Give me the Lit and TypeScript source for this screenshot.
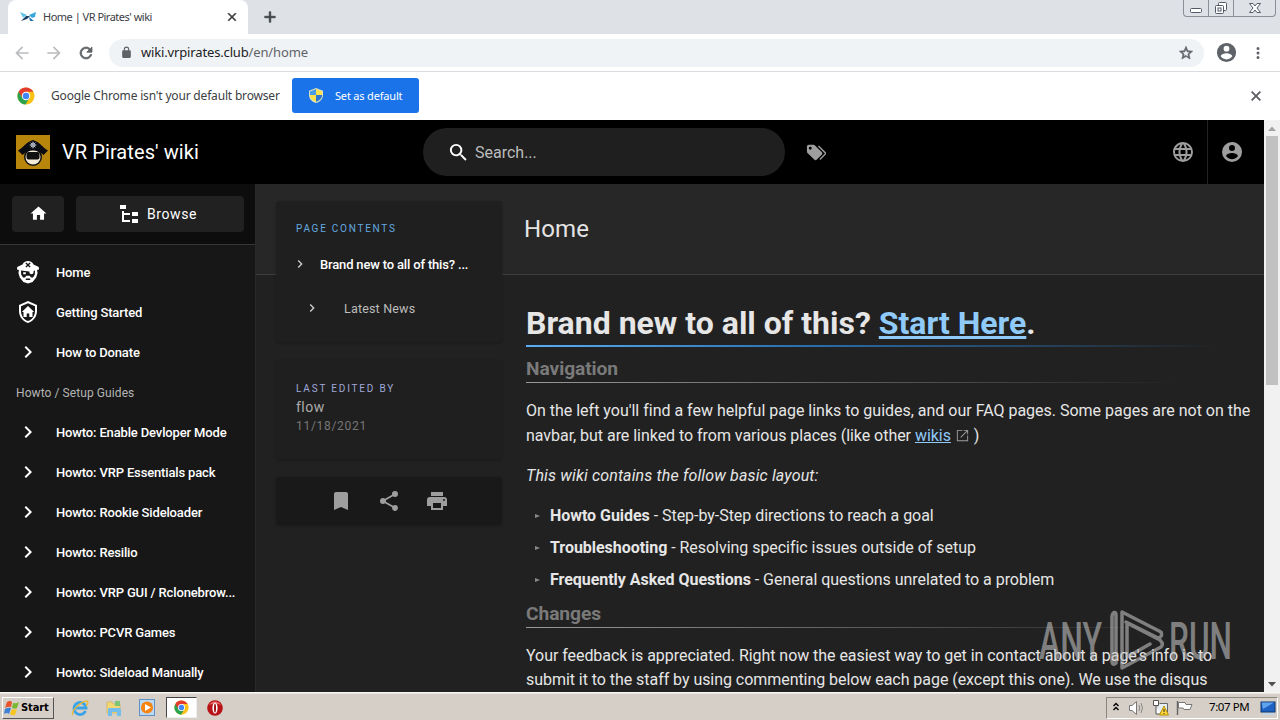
import { LitElement, html, css, svg } from 'lit';
import { customElement, property } from 'lit/decorators.js';

const icons: Record<string, string> = {
  home: 'M10,20V14H14V20H19V12H22L12,3L2,12H5V20H10Z',
  chevron: 'M8.59,16.58L13.17,12L8.59,7.41L10,6L16,12L10,18L8.59,16.58Z',
  magnify: 'M9.5,3A6.5,6.5 0 0,1 16,9.5C16,11.11 15.41,12.59 14.44,13.73L14.71,14H15.5L20.5,19L19,20.5L14,15.5V14.71L13.73,14.44C12.59,15.41 11.11,16 9.5,16A6.5,6.5 0 0,1 3,9.5A6.5,6.5 0 0,1 9.5,3M9.5,5C7,5 5,7 5,9.5C5,12 7,14 9.5,14C12,14 14,12 14,9.5C14,7 12,5 9.5,5Z',
  tags: 'M5.5,9A1.5,1.5 0 0,0 7,7.5A1.5,1.5 0 0,0 5.5,6A1.5,1.5 0 0,0 4,7.5A1.5,1.5 0 0,0 5.5,9M17.41,11.58C17.77,11.94 18,12.44 18,13C18,13.55 17.78,14.05 17.41,14.41L12.41,19.41C12.05,19.77 11.55,20 11,20C10.45,20 9.95,19.78 9.58,19.41L2.59,12.42C2.22,12.05 2,11.55 2,11V6C2,4.89 2.89,4 4,4H9C9.55,4 10.05,4.22 10.41,4.58L17.41,11.58M13.54,5.71L14.54,4.71L21.41,11.58C21.78,11.94 22,12.45 22,13C22,13.55 21.78,14.05 21.42,14.41L16.04,19.79L15.04,18.79L20.75,13L13.54,5.71Z',
  web: 'M16.36,14C16.44,13.34 16.5,12.68 16.5,12C16.5,11.32 16.44,10.66 16.36,10H19.74C19.9,10.64 20,11.31 20,12C20,12.69 19.9,13.36 19.74,14M14.59,19.56C15.19,18.45 15.65,17.25 15.97,16H18.92C17.96,17.65 16.43,18.93 14.59,19.56M14.34,14H9.66C9.56,13.34 9.5,12.68 9.5,12C9.5,11.32 9.56,10.65 9.66,10H14.34C14.43,10.65 14.5,11.32 14.5,12C14.5,12.68 14.43,13.34 14.34,14M12,19.96C11.17,18.76 10.5,17.43 10.09,16H13.91C13.5,17.43 12.83,18.76 12,19.96M8,8H5.08C6.03,6.34 7.57,5.06 9.4,4.44C8.8,5.55 8.35,6.75 8,8M5.08,16H8C8.35,17.25 8.8,18.45 9.4,19.56C7.57,18.93 6.03,17.65 5.08,16M4.26,14C4.1,13.36 4,12.69 4,12C4,11.31 4.1,10.64 4.26,10H7.64C7.56,10.66 7.5,11.32 7.5,12C7.5,12.68 7.56,13.34 7.64,14M12,4.03C12.83,5.23 13.5,6.57 13.91,8H10.09C10.5,6.57 11.17,5.23 12,4.03M18.92,8H15.97C15.65,6.75 15.19,5.55 14.59,4.44C16.43,5.07 17.96,6.34 18.92,8M12,2C6.47,2 2,6.5 2,12A10,10 0 0,0 12,22A10,10 0 0,0 22,12A10,10 0 0,0 12,2Z',
  account: 'M12,19.2C9.5,19.2 7.29,17.92 6,16C6.03,14 10,12.9 12,12.9C14,12.9 17.97,14 18,16C16.71,17.92 14.5,19.2 12,19.2M12,5A3,3 0 0,1 15,8A3,3 0 0,1 12,11A3,3 0 0,1 9,8A3,3 0 0,1 12,5M12,2A10,10 0 0,0 2,12A10,10 0 0,0 12,22A10,10 0 0,0 22,12C22,6.47 17.5,2 12,2Z',
  bookmark: 'M17,3H7A2,2 0 0,0 5,5V21L12,18L19,21V5C19,3.89 18.1,3 17,3Z',
  share: 'M18,16.08C17.24,16.08 16.56,16.38 16.04,16.85L8.91,12.7C8.96,12.47 9,12.24 9,12C9,11.76 8.96,11.53 8.91,11.3L15.96,7.19C16.5,7.69 17.21,8 18,8A3,3 0 0,0 21,5A3,3 0 0,0 18,2A3,3 0 0,0 15,5C15,5.24 15.04,5.47 15.09,5.7L8.04,9.81C7.5,9.31 6.79,9 6,9A3,3 0 0,0 3,12A3,3 0 0,0 6,15C6.79,15 7.5,14.69 8.04,14.19L15.16,18.34C15.11,18.55 15.08,18.77 15.08,19C15.08,20.61 16.39,21.91 18,21.91C19.61,21.91 20.92,20.61 20.92,19A2.92,2.92 0 0,0 18,16.08Z',
  printer: 'M18,3H6V7H18M19,12A1,1 0 0,1 18,11A1,1 0 0,1 19,10A1,1 0 0,1 20,11A1,1 0 0,1 19,12M16,19H8V14H16M19,8H5A3,3 0 0,0 2,11V17H6V21H18V17H22V11A3,3 0 0,0 19,8Z',
  tree: 'M3,3H9V7H3V3M15,10H21V14H15V10M15,17H21V21H15V17M13,13H7V18H13V20H5V9H7V11H13V13Z',
  shield: 'M21,11C21,16.55 17.16,21.74 12,23C6.84,21.74 3,16.55 3,11V5L12,1L21,5V11M12,21C15.75,20 19,15.54 19,11.22V6.3L12,3.18L5,6.3V11.22C5,15.54 8.25,20 12,21M12,6L5.8,12H7.5V17H10.7V13.4H13.3V17H16.5V12H18.2L12,6Z',
  pirate: 'M12,1C14.5,1 16.6,2.4 17.5,4.6L22.8,7L23,9.5L21,10L21.6,13L20.2,17.4L16.6,22L12,23.4L7.4,22L3.8,17.4L2.4,13L3,10L1,9.5L1.2,7L6.5,4.6C7.4,2.4 9.5,1 12,1M9.4,3.4L11.1,5L9.4,6.6L10.3,7.4L12,5.9L13.7,7.4L14.6,6.6L12.9,5L14.6,3.4L13.7,2.6L12,4.1L10.3,2.6L9.4,3.4M5,10.6L5.2,14.6L7,17.4L9,17.4L10.2,15.8H13.8L15,17.4L17,17.4L18.8,14.6L19,10.6L17.6,10.9C17.8,13 16.8,14.2 15.6,14.2C14,14.2 13.2,13 13.4,11.4L5,10.6M7.2,12.2H9.8V14.2H7.2V12.2M9.8,18.4V20H14.2V18.4H9.8Z',
  back: 'M20,11V13H7.8L13.4,18.6L12,20L4,12L12,4L13.4,5.4L7.8,11H20Z',
  forward: 'M4,11V13H16.2L10.6,18.6L12,20L20,12L12,4L10.6,5.4L16.2,11H4Z',
  reload: 'M17.65,6.35C16.2,4.9 14.21,4 12,4A8,8 0 0,0 4,12A8,8 0 0,0 12,20C15.73,20 18.84,17.45 19.73,14H17.65C16.83,16.33 14.61,18 12,18A6,6 0 0,1 6,12A6,6 0 0,1 12,6C13.66,6 15.14,6.69 16.22,7.78L13,11H20V4L17.65,6.35Z',
  lock: 'M18,8H17V6A5,5 0 0,0 7,6V8H6A2,2 0 0,0 4,10V20A2,2 0 0,0 6,22H18A2,2 0 0,0 20,20V10A2,2 0 0,0 18,8M9,6A3,3 0 0,1 15,6V8H9V6Z',
  star: 'M12,15.39L8.24,17.66L9.23,13.38L5.91,10.5L10.29,10.13L12,6.09L13.71,10.13L18.09,10.5L14.77,13.38L15.76,17.66M22,9.24L14.81,8.63L12,2L9.19,8.63L2,9.24L7.45,13.97L5.82,21L12,17.27L18.18,21L16.54,13.97L22,9.24Z',
  close: 'M19,6.41L17.59,5L12,10.59L6.41,5L5,6.41L10.59,12L5,17.59L6.41,19L12,13.41L17.59,19L19,17.59L13.41,12L19,6.41Z',
  plus: 'M19,13H13V19H11V13H5V11H11V5H13V11H19V13Z',
  dots: 'M12,16A2,2 0 1,1 12,20A2,2 0 0,1 12,16M12,10A2,2 0 1,1 12,14A2,2 0 0,1 12,10M12,4A2,2 0 1,1 12,8A2,2 0 0,1 12,4Z',
  external: 'M14,3V4.5H18.5L8.6,14.4L9.7,15.5L19.5,5.6V10H21V3M19.5,19.5H4.5V4.5H12V3H3V21H21V12H19.5V19.5Z',
};

@customElement('wiki-icon')
export class WikiIcon extends LitElement {

  @property()
  name = '';

  @property({ type: Number })
  size = 24;

  static styles = css`
    :host {
      display: block;
      flex: none;
    }

    svg {
      display: block;
      fill: currentColor;
    }

    .bold {
      stroke: currentColor;
      stroke-width: 1px;
    }
  `;

  render() {
    const bold = ['close', 'plus', 'reload', 'star'].includes(this.name);

    return html`<svg class=${bold ? 'bold' : ''} width=${this.size} height=${this.size} viewBox="0 0 24 24"><path d=${icons[this.name]} fill-rule="evenodd"></path></svg>`;
  }
}

const chromeLogo = (size: number) => html`
  <svg width=${size} height=${size} viewBox="0 0 20 20">
    <circle cx="10" cy="10" r="9.5" fill="#fbc116"></circle>
    <path d="M10 10 1.8 5.2A9.5 9.5 0 0 0 9.4 19.5L14 12Z" fill="#2ba24c"></path>
    <path d="M10 10 5.8 12 1.8 5.2A9.5 9.5 0 0 1 18.2 5.4H10Z" fill="#e33b2e"></path>
    <circle cx="10" cy="10" r="4.7" fill="#fff"></circle>
    <circle cx="10" cy="10" r="3.6" fill="#4285f4"></circle>
  </svg>
`;

const quadrants = svg`
  <path d="M0 3 7 0V7H0Z" fill="#4a9be8"></path>
  <path d="M7 0 14 3V7H7Z" fill="#ffe14d"></path>
  <path d="M0 7H7V15C3 13 0 11 0 7Z" fill="#ffe14d"></path>
  <path d="M7 7H14C14 11 11 13 7 15Z" fill="#2f74d0"></path>
`;

@customElement('app-root')
export class AppRoot extends LitElement {

  links = [
    { icon: 'pirate', label: 'Home' },
    { icon: 'shield', label: 'Getting Started' },
    { icon: 'chevron', label: 'How to Donate' },
    { label: 'Howto / Setup Guides' },
    { icon: 'chevron', label: 'Howto: Enable Devloper Mode' },
    { icon: 'chevron', label: 'Howto: VRP Essentials pack' },
    { icon: 'chevron', label: 'Howto: Rookie Sideloader' },
    { icon: 'chevron', label: 'Howto: Resilio' },
    { icon: 'chevron', label: 'Howto: VRP GUI / Rclonebrow...' },
    { icon: 'chevron', label: 'Howto: PCVR Games' },
    { icon: 'chevron', label: 'Howto: Sideload Manually' },
  ];

  static styles = css`
    :host {
      display: flex;
      flex-direction: column;
      position: relative;
      width: 1280px;
      height: 720px;
      overflow: hidden;
      font-family: Roboto, sans-serif;
      color: #fff;
      --ui: "Noto Sans", "Open Sans", sans-serif;
    }

    * {
      box-sizing: border-box;
    }

    svg {
      display: block;
      flex: none;
    }

    .tabs {
      display: flex;
      flex: none;
      height: 34px;
      padding-left: 8px;
      background: #dee1e6;
      color: #3c4043;
      font: 11px var(--ui);
    }

    .tab {
      display: flex;
      align-items: center;
      width: 240px;
      padding: 0 9px 0 12px;
      background: #fff;
      border-radius: 8px 8px 0 0;
    }

    .tab span {
      flex: 1;
      margin-left: 7px;
      padding-bottom: 1px;
      letter-spacing: -0.5px;
    }

    .tabs > wiki-icon {
      margin: 8px 0 0 13px;
    }

    .window {
      display: flex;
      width: 93px;
      height: 17px;
      margin: 0 4px 0 auto;
      border: 1px solid #8b8f98;
      border-top: 0;
      border-radius: 0 0 4px 4px;
    }

    .window div {
      display: flex;
      justify-content: center;
      width: 25px;
      border-right: 1px solid #8b8f98;
    }

    .window div:last-child {
      flex: 1;
      border: 0;
    }

    .toolbar {
      display: flex;
      flex: none;
      align-items: center;
      height: 38px;
      padding: 0 10px 0 12px;
      background: #fff;
      border-bottom: 1px solid #d9dbde;
      color: #5f6368;
    }

    .toolbar > wiki-icon {
      margin: 0 14px 0 1px;
    }

    .toolbar > .off {
      margin: 0 12px 0 0;
      color: #babcbe;
    }

    .toolbar > .dots {
      margin: 0 3px 0 11px;
    }

    .toolbar > .me {
      margin: 0;
    }

    .url {
      display: flex;
      flex: 1;
      align-items: center;
      height: 28px;
      margin-right: 11px;
      padding: 0 10px 0 11px;
      border-radius: 14px;
      background: #f0f3f6;
      font: 13px var(--ui);
      letter-spacing: -0.15px;
    }

    .url span {
      flex: 1;
      margin-left: 8px;
      padding-bottom: 1px;
    }

    .url b {
      font-weight: 400;
      color: #202124;
    }

    .infobar {
      display: flex;
      flex: none;
      align-items: center;
      height: 48px;
      padding: 0 16px 0 17px;
      background: #fff;
      color: #3c4043;
      font: 12px var(--ui);
    }

    .infobar > span {
      width: 241px;
      padding: 0 0 1px 16px;
      letter-spacing: -0.18px;
      white-space: nowrap;
    }

    .infobar wiki-icon {
      margin-left: auto;
      color: #5f6368;
    }

    .default {
      display: flex;
      align-items: center;
      width: 127px;
      height: 35px;
      margin: 0 0 2px 16px;
      padding-left: 17px;
      gap: 12px;
      border: 0;
      border-radius: 3px;
      background: #1a73e8;
      color: #fff;
      font: 11px var(--ui);
      letter-spacing: -0.18px;
    }

    .viewport {
      display: flex;
      height: 572px;
    }

    .wiki {
      display: flex;
      flex-direction: column;
      width: 1264px;
      background: #212121;
    }

    .top {
      display: flex;
      flex: none;
      align-items: center;
      height: 64px;
      padding-left: 16px;
      background: #000;
    }

    .brand {
      width: 361px;
      padding-left: 12px;
      font-size: 20px;
      letter-spacing: 0.08px;
    }

    .search {
      display: flex;
      align-items: center;
      width: 362px;
      height: 48px;
      margin: 0 20px 0 12px;
      padding-left: 24px;
      gap: 5px;
      border-radius: 24px;
      background: #1f1f1f;
      color: #bcbcbc;
      font-size: 16px;
    }

    .search wiki-icon {
      color: #fff;
    }

    .top > wiki-icon {
      color: #9e9e9e;
    }

    .top .web {
      height: 64px;
      margin-left: auto;
      padding: 20px 12px 0 0;
      border-right: 1px solid #232323;
    }

    .top .me {
      margin: 0 20px 0 12px;
    }

    .body {
      display: flex;
      flex: 1;
      min-height: 0;
    }

    .sidebar {
      width: 256px;
      flex: none;
      background: #171717;
      border-right: 1px solid #292929;
    }

    .actions {
      display: flex;
      height: 61px;
      padding: 12px 11px 0 12px;
      gap: 12px;
      background: #0d0d0d;
      border-bottom: 1px solid #363636;
    }

    .btn {
      display: flex;
      align-items: center;
      justify-content: center;
      width: 52px;
      height: 36px;
      padding-bottom: 1px;
      border-radius: 4px;
      background: #212121;
      font-size: 14px;
      letter-spacing: 0.6px;
      gap: 6px;
    }

    .btn.wide {
      flex: 1;
      padding: 0 6px 0 0;
    }

    .links {
      padding-top: 7px;
    }

    .link {
      display: flex;
      align-items: center;
      height: 40px;
      padding: 0 16px;
      font-size: 13px;
      font-weight: 500;
      letter-spacing: -0.15px;
    }

    .link span {
      margin-left: 16px;
      white-space: nowrap;
    }

    .link.head {
      padding-top: 1px;
      color: #b4b4b4;
      font-size: 12px;
      font-weight: 400;
      letter-spacing: 0.08px;
    }

    .link.head span {
      margin: 0;
    }

    .page {
      display: grid;
      flex: 1;
      grid-template: 91px 1fr / 20px 226px 24px 1fr;
      min-height: 0;
    }

    .title {
      grid-area: 1 / 1 / 2 / 5;
      padding: 31px 0 0 268px;
      background: #272727;
      border-bottom: 1px solid #3d3d3d;
      color: #e4e4e4;
      font-size: 24px;
      line-height: 28px;
      letter-spacing: 0.1px;
    }

    .cards {
      grid-area: 1 / 2 / 3 / 3;
      padding-top: 17px;
    }

    .card {
      margin-bottom: 18px;
      border-radius: 4px;
      background: #1f1f1f;
      box-shadow: 0 1px 3px rgba(0, 0, 0, 0.25);
    }

    .toc {
      height: 141px;
      padding: 19px 20px 0;
    }

    .edited {
      height: 99px;
      padding: 20px 20px 0;
      color: #adadad;
      font-size: 14px;
      line-height: 20px;
      letter-spacing: 0.5px;
    }

    .over {
      color: #64a9e0;
      font-size: 10px;
      line-height: 18px;
      letter-spacing: 1.75px;
    }

    .edited .over {
      margin-bottom: -1px;
      color: #9fa8da;
      letter-spacing: 1.82px;
    }

    .edited small {
      display: block;
      color: #777;
      font-size: 12px;
      line-height: 18px;
      letter-spacing: 0.7px;
    }

    .entry {
      display: flex;
      align-items: center;
      height: 44px;
      margin: 4px 0 0 -4px;
      gap: 12px;
      font-size: 13px;
      font-weight: 500;
      letter-spacing: -0.17px;
      white-space: nowrap;
    }

    .entry.sub {
      margin: 0 0 0 8px;
      gap: 24px;
      color: #bdbdbd;
      font-size: 12.5px;
      font-weight: 400;
      letter-spacing: 0.18px;
    }

    .entry wiki-icon {
      color: #cfcfcf;
    }

    .tools {
      display: flex;
      align-items: center;
      justify-content: center;
      height: 48px;
      gap: 24px;
      background: #191919;
      color: #9e9e9e;
    }

    article {
      grid-area: 2 / 4 / 3 / 5;
      color: #e6e6e6;
      font-size: 16px;
      line-height: 25px;
      letter-spacing: -0.01px;
      overflow: hidden;
      white-space: nowrap;
    }

    a {
      color: #90caf9;
      text-decoration: underline;
    }

    h1 {
      width: 726px;
      height: 43px;
      margin: 29px 0 0;
      padding-top: 3px;
      font-size: 32px;
      line-height: 32px;
      letter-spacing: 0;
      border-bottom: 2px solid;
      border-image: linear-gradient(to right, #5aaef5, #2a6fae 38%, #212121 95%) 1;
    }

    h2 {
      width: 726px;
      height: 27px;
      margin: 9px 0 0;
      padding-top: 2px;
      color: #7a7a7a;
      font-size: 19.2px;
      line-height: 22px;
      letter-spacing: -0.08px;
      border-bottom: 1px solid;
      border-image: linear-gradient(to right, #9a9a9a, #212121 90%) 1;
    }

    p {
      margin: 15px 0 0;
    }

    em {
      letter-spacing: 0.14px;
    }

    .second {
      letter-spacing: -0.04px;
    }

    .ext {
      display: inline-block;
      vertical-align: -2px;
      margin: 0;
      color: #9e9e9e;
    }

    ul {
      margin: 12px 0 0;
      padding: 0;
      list-style: none;
      line-height: 32px;
      letter-spacing: -0.04px;
    }

    li {
      display: flex;
      align-items: center;
      padding-left: 9px;
      white-space: pre;
    }

    li::before {
      content: '';
      margin-right: 10px;
      border: 2.5px solid transparent;
      border-left: 5px solid #8a8a8a;
      border-right: 0;
    }

    ul + h2 {
      margin-top: 5px;
    }

    .tight {
      margin-top: 16px;
      line-height: 24px;
      letter-spacing: -0.05px;
    }

    .scroll {
      display: flex;
      flex-direction: column;
      align-items: center;
      justify-content: space-between;
      width: 16px;
      background: #f1f1f1;
    }

    .thumb {
      width: 12px;
      height: 249px;
      margin-bottom: auto;
      background: #c1c1c1;
    }

    .taskbar {
      display: flex;
      flex: none;
      align-items: center;
      height: 28px;
      padding: 2px 2px 0;
      background: #d5cfc7;
      border-top: 1px solid #f8f6f2;
      box-shadow: inset 0 1px #e8e4de;
      color: #000;
      font: 12px var(--ui);
    }

    .start {
      display: flex;
      align-items: center;
      width: 52px;
      height: 22px;
      padding-left: 1px;
      gap: 1px;
      border: 1px solid #fff;
      border-color: #fff #555 #555 #fff;
      font: bold 11px "DejaVu Sans Condensed", sans-serif;
      letter-spacing: -0.1px;
    }

    .quick {
      display: flex;
      align-items: center;
      margin-left: 17px;
      gap: 16px;
    }

    .active {
      display: flex;
      align-items: center;
      justify-content: center;
      width: 31px;
      height: 21px;
      margin: 0 -6px;
      background: #fff;
      border: 1px solid #555;
      border-color: #444 #eee #eee #444;
    }

    .tray {
      display: flex;
      align-items: center;
      height: 22px;
      width: 172px;
      margin-left: auto;
      padding-left: 6px;
      border: 1px solid #8a867e;
      border-color: #8a867e #fff #fff #8a867e;
    }

    .tray span {
      width: 51px;
      margin-left: 8px;
      padding-bottom: 2px;
      font-size: 11.5px;
      letter-spacing: -0.4px;
      white-space: nowrap;
    }

    .watermark {
      position: absolute;
      left: 1036px;
      top: 606px;
      opacity: 0.58;
    }
  `;

  renderBrowser() {
    return html`
      <div class="tabs">
        <div class="tab">
          <svg width="16" height="16" viewBox="0 0 16 16">
            <path d="M0 3 7 6 3 8.5Z" fill="#5cc3ea"></path>
            <path d="M16 3 9 6 12 9 15 8Z" fill="#3aa7dc"></path>
            <path d="M1 12 6 7 10 7 7 10Z" fill="#1d3f66"></path>
            <path d="M9 8 14 12H10Z" fill="#2273b8"></path>
          </svg>
          <span>Home | VR Pirates' wiki</span>
          <wiki-icon name="close" size="14"></wiki-icon>
        </div>
        <wiki-icon name="plus" size="18"></wiki-icon>
        <div class="window">
          <div><svg width="14" height="16"><rect x="1.5" y="8.5" width="11" height="4" rx="1" fill="#fff" stroke="#555b66"></rect></svg></div>
          <div>
            <svg width="14" height="16" fill="#fff" stroke="#555b66">
              <rect x="4.5" y="2.5" width="8" height="8" rx="1"></rect>
              <rect x="1.5" y="5.5" width="8" height="8" rx="1"></rect>
              <rect x="4" y="8" width="3" height="3"></rect>
            </svg>
          </div>
          <div><svg width="14" height="16"><path d="M1.5 3.5H5L7 6 9 3.5H12.5L9 8 12.5 12.5H9L7 10 5 12.5H1.5L5 8Z" fill="#fff" stroke="#555b66"></path></svg></div>
        </div>
      </div>
      <div class="toolbar">
        <wiki-icon class="off" name="back" size="20"></wiki-icon>
        <wiki-icon class="off" name="forward" size="20"></wiki-icon>
        <wiki-icon name="reload" size="18"></wiki-icon>
        <div class="url">
          <wiki-icon name="lock" size="13"></wiki-icon>
          <span><b>wiki.vrpirates.club</b>/en/home</span>
          <wiki-icon name="star" size="16"></wiki-icon>
        </div>
        <wiki-icon class="me" name="account" size="23"></wiki-icon>
        <wiki-icon class="dots" name="dots" size="18"></wiki-icon>
      </div>
      <div class="infobar">
        ${chromeLogo(18)}
        <span>Google Chrome isn't your default browser</span>
        <button class="default">
          <svg width="14" height="15" viewBox="-1 -1 16 17"><path d="M-1 2 7-1 15 2V7C15 12 11 15 7 16 3 15-1 12-1 7Z" fill="#dfe6c0"></path>${quadrants}</svg>
          Set as default
        </button>
        <wiki-icon name="close" size="16"></wiki-icon>
      </div>
    `;
  }

  renderHeader() {
    return html`
      <div class="top">
        <svg width="34" height="34" viewBox="0 0 34 34">
          <rect width="34" height="34" fill="#b8860b"></rect>
          <circle cx="17" cy="22" r="9" fill="#111"></circle>
          <circle cx="17" cy="22" r="7.5" fill="#f4ead8"></circle>
          <rect x="10.5" y="17" width="13" height="7.5" rx="2" fill="#111"></rect>
          <path d="M2 15.5C8 12 10 7 17 5C24 7 26 12 32 15.5L27.5 20C21 14 13 14 6.5 20Z" fill="#0b0b12"></path>
          <circle cx="17" cy="10" r="2" fill="none" stroke="#d8dce8"></circle>
          <path d="M13.5 10H20.5M17 6.5V13.5M14.5 7.5 19.5 12.5M19.5 7.5 14.5 12.5" stroke="#b9bfce" stroke-width=".7"></path>
        </svg>
        <div class="brand">VR Pirates' wiki</div>
        <div class="search">
          <wiki-icon name="magnify" size="23"></wiki-icon>
          <span>Search...</span>
        </div>
        <wiki-icon name="tags" size="23"></wiki-icon>
        <wiki-icon class="web" name="web"></wiki-icon>
        <wiki-icon class="me" name="account"></wiki-icon>
      </div>
    `;
  }

  renderSidebar() {
    return html`
      <nav class="sidebar">
        <div class="actions">
          <div class="btn"><wiki-icon name="home" size="19"></wiki-icon></div>
          <div class="btn wide"><wiki-icon name="tree"></wiki-icon>Browse</div>
        </div>
        <div class="links">
          ${this.links.map(({ icon, label }) => html`
            <div class="link ${icon ? '' : 'head'}">
              ${icon ? html`<wiki-icon name=${icon}></wiki-icon>` : ''}
              <span>${label}</span>
            </div>
          `)}
        </div>
      </nav>
    `;
  }

  renderPage() {
    return html`
      <main class="page">
        <div class="title">Home</div>
        <div class="cards">
          <div class="card toc">
            <div class="over">PAGE CONTENTS</div>
            <div class="entry"><wiki-icon name="chevron" size="16"></wiki-icon>Brand new to all of this? ...</div>
            <div class="entry sub"><wiki-icon name="chevron" size="16"></wiki-icon>Latest News</div>
          </div>
          <div class="card edited">
            <div class="over">LAST EDITED BY</div>
            flow
            <small>11/18/2021</small>
          </div>
          <div class="card tools">
            <wiki-icon name="bookmark"></wiki-icon>
            <wiki-icon name="share"></wiki-icon>
            <wiki-icon name="printer"></wiki-icon>
          </div>
        </div>
        <article>
          <h1>Brand new to all of this? <a>Start Here</a>.</h1>
          <h2>Navigation</h2>
          <p>On the left you'll find a few helpful page links to guides, and our FAQ pages. Some pages are not on the<br><span class="second">navbar, but are linked to from various places (like other <a>wikis</a> <wiki-icon class="ext" name="external" size="15"></wiki-icon> )</span></p>
          <p><em>This wiki contains the follow basic layout:</em></p>
          <ul>
            <li><b>Howto Guides</b> - Step-by-Step directions to reach a goal</li>
            <li><b>Troubleshooting</b> - Resolving specific issues outside of setup</li>
            <li><b>Frequently Asked Questions</b> - General questions unrelated to a problem</li>
          </ul>
          <h2>Changes</h2>
          <p class="tight">Your feedback is appreciated. Right now the easiest way to get in contact about a page's info is to<br>submit it to the staff by using commenting below each page (except this one). We use the disqus</p>
        </article>
      </main>
    `;
  }

  renderTaskbar() {
    return html`
      <div class="taskbar">
        <div class="start">
          <svg width="16" height="16" viewBox="0 0 16 16">
            <path d="M3 2Q6 0 8 2L7 7Q4 6 1 8Z" fill="#e8532b"></path>
            <path d="M9 3Q12 4 15 2L13 8Q11 9 8 8Z" fill="#7ab834"></path>
            <path d="M1 9Q4 7 7 8L5 14Q3 12 0 14Z" fill="#3b82d6"></path>
            <path d="M8 9Q10 10 13 9L11 15Q8 16 6 14Z" fill="#f8c522"></path>
          </svg>
          Start
        </div>
        <div class="quick">
          <svg width="18" height="18" viewBox="0 0 18 18">
            <path d="M14.5 12A6 6 0 1 1 15 9H5" fill="none" stroke="#3ba4e8" stroke-width="2.8"></path>
            <path d="M2 16C-1 13 10 2 16 2 18 3 16 6 15 7" fill="none" stroke="#e8b830" stroke-width="1.3"></path>
          </svg>
          <svg width="18" height="18" viewBox="0 0 18 18">
            <path d="M2 3H7L8 5H15V14H2Z" fill="#f2d777" stroke="#c9a848" stroke-width=".6"></path>
            <path d="M10 2H15V7H10Z" fill="#7cc576"></path>
            <path d="M3 17V10Q3 9 5 9H14Q16 9 16 11V17H12V13H7V17Z" fill="#75bdea"></path>
          </svg>
          <svg width="17" height="17" viewBox="0 0 17 17">
            <rect x=".5" y=".5" width="15" height="16" fill="#bcd8f2" stroke="#5f93c8"></rect>
            <circle cx="8" cy="8.5" r="6" fill="#f58410"></circle>
            <path d="M6 5 12 8.5 6 12Z" fill="#fff"></path>
          </svg>
          <div class="active">${chromeLogo(15)}</div>
          <svg width="16" height="16" viewBox="0 0 16 16">
            <circle cx="8" cy="8" r="7.8" fill="#b81218"></circle>
            <path d="M2 5A7 7 0 0 1 14 5Q8 2 2 5Z" fill="#e86a66"></path>
            <ellipse cx="8" cy="8" rx="2.6" ry="5.5" fill="#fff"></ellipse>
            <ellipse cx="8" cy="8" rx="1" ry="4.5" fill="#9c1015"></ellipse>
          </svg>
        </div>
        <div class="tray">
          <svg width="88" height="18" viewBox="0 0 88 18">
            <path d="M.5 7 3 4.5 5.5 7M.5 11 3 8.5 5.5 11" fill="none" stroke="#000" stroke-width="1.4"></path>
            <path d="M16.5 6.5H19L23.5 2.5V15.5L19 11.5H16.5Z" fill="#fff" stroke="#777"></path>
            <path d="M26 6Q27.5 9 26 12M28 4Q31 9 28 14" fill="none" stroke="#888"></path>
            <path d="M46.5 4.5H54.5V13.5H44.5V10" fill="#e5edf5" stroke="#666"></path>
            <path d="M40.5 1.5H45.5V6.5H40.5ZM43 7V15H48" fill="#fff" stroke="#555"></path>
            <path d="M51 7 55.5 16H46.5Z" fill="#ffd83a" stroke="#b89000"></path>
            <path d="M51 10V13M51 14V15" stroke="#222"></path>
            <path d="M64.5 2V16" stroke="#666" stroke-width="1.5"></path>
            <path d="M65.5 3.5H72L73 5.5H79L77 10.5H71L70 9H65.5Z" fill="#fff" stroke="#777"></path>
          </svg>
          <span>7:07 PM</span>
          <svg width="16" height="16" viewBox="0 0 16 16">
            <rect x="1" y="2" width="14" height="10" fill="#1e63c4" stroke="#0d356f"></rect>
            <path d="M1.5 2.5H14L3 9Z" fill="#5fa4ec"></path>
            <path d="M3 13H14V15H3Z" fill="#c0d4e8"></path>
          </svg>
        </div>
      </div>
    `;
  }

  renderWatermark() {
    return html`
      <svg class="watermark" width="210" height="68" viewBox="0 0 210 68">
        <g fill="#c4c4c4" font-family="Roboto" font-size="52" font-weight="500">
          <text x="3" y="53" textLength="63" lengthAdjust="spacingAndGlyphs">ANY</text>
          <text x="133" y="53" textLength="63" lengthAdjust="spacingAndGlyphs">RUN</text>
        </g>
        <g fill="none" stroke="#c4c4c4" stroke-width="3.5" stroke-linejoin="round" stroke-linecap="round">
          <path d="M80 33V9Q80 6 78 6.5Q76 8 76 10V56Q77 60 80 57V33"></path>
          <path d="M90 16 122 32Q127 31 125 26L86 6V62L125 41Q128 38 124 34L91 17V51L114 38"></path>
        </g>
      </svg>
    `;
  }

  render() {
    return html`
      ${this.renderBrowser()}
      <div class="viewport">
        <div class="wiki">
          ${this.renderHeader()}
          <div class="body">
            ${this.renderSidebar()}
            ${this.renderPage()}
          </div>
        </div>
        <div class="scroll">
          <svg width="16" height="16"><path d="M4 11 8 6.5 12 11Z" fill="#a3a3a3"></path></svg>
          <div class="thumb"></div>
          <svg width="16" height="16"><path d="M4 6 8 10.5 12 6Z" fill="#505050"></path></svg>
        </div>
      </div>
      ${this.renderTaskbar()}
      ${this.renderWatermark()}
    `;
  }
}
